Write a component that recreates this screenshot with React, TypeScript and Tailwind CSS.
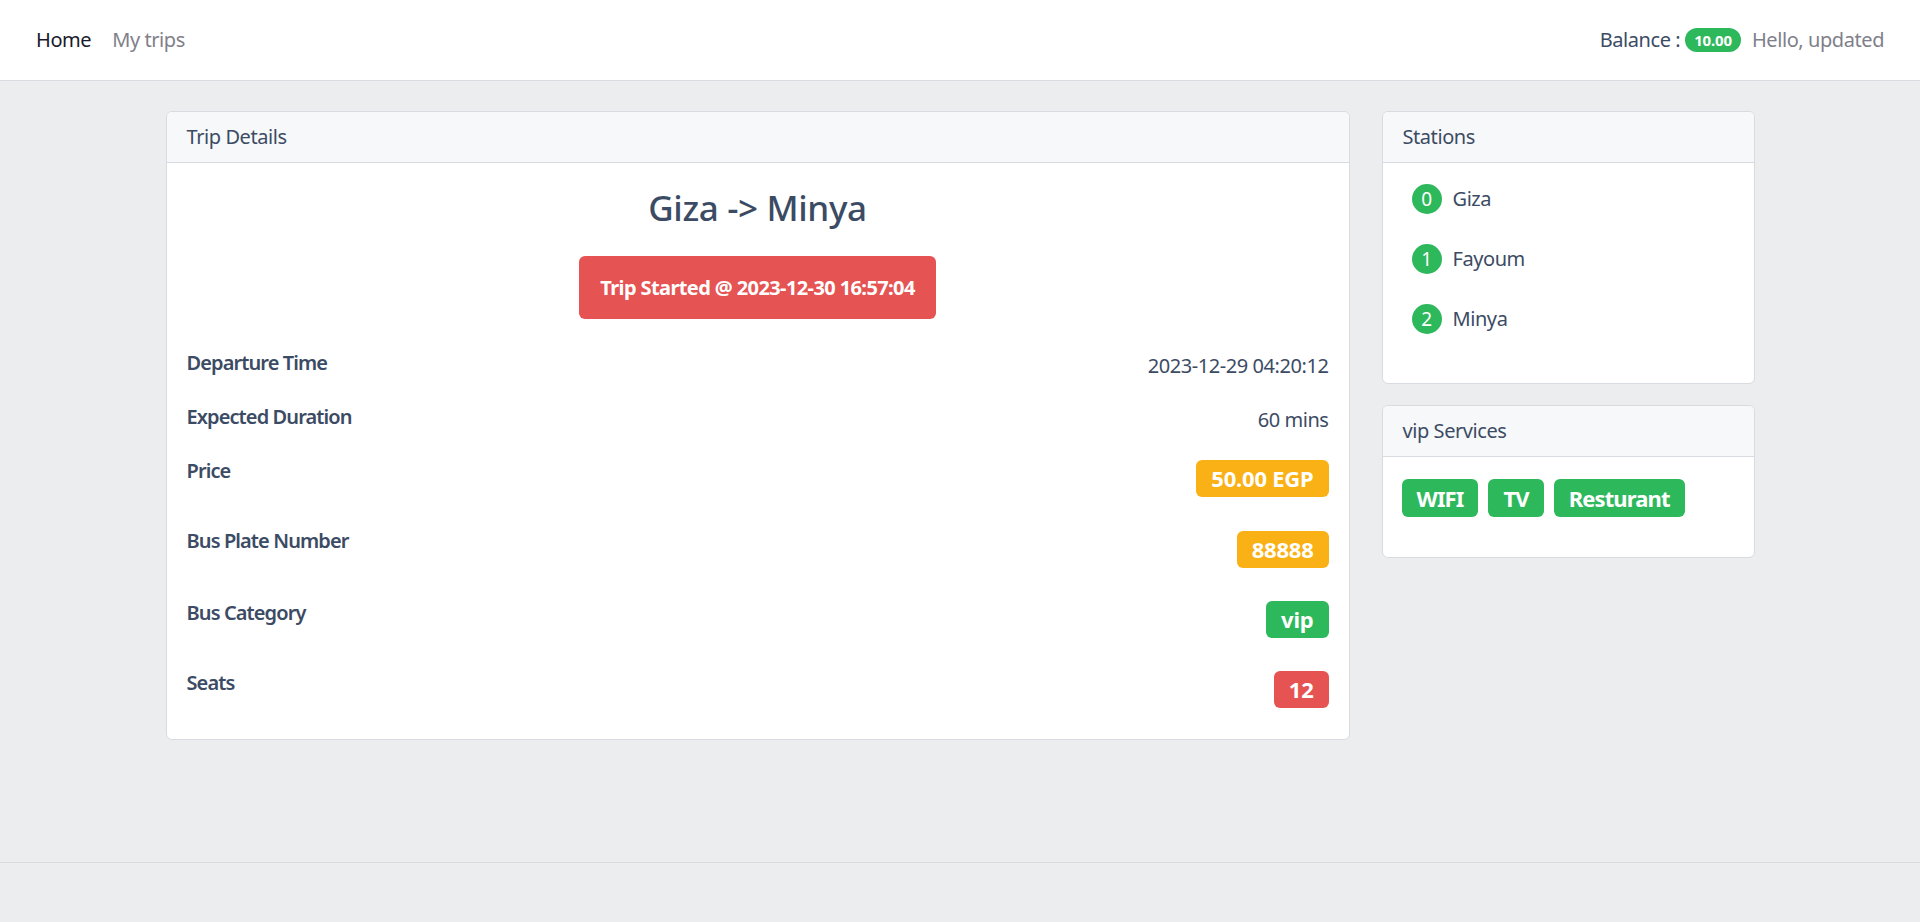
import React from "react";

const font = { fontFamily: '"Noto Sans", "Open Sans", sans-serif' };

function Card({ title, children, className = "" }: { title: string; children: React.ReactNode; className?: string }) {
  return (
    <div className={"bg-white border border-[#d8dbe0] rounded-[6px] overflow-hidden " + className}>
      <div className="h-[51px] px-[20px] flex items-center bg-[#f7f8f9] border-b border-[#d8dbe0] text-[20px] text-[#3c4b64]">
        {title}
      </div>
      {children}
    </div>
  );
}

function Badge({ children, color }: { children: React.ReactNode; color: string }) {
  return (
    <span className={"inline-flex items-center h-[37px] px-[15px] rounded-[6px] text-white font-bold text-[22px] tracking-[-0.01em] " + color}>
      {children}
    </span>
  );
}

export default function App() {
  const stations = ["Giza", "Fayoum", "Minya"];
  return (
    <div style={font} className="min-h-screen flex flex-col bg-[#ebedef] text-[#3c4b64] tracking-[-0.027em]">
      <header className="h-[81px] bg-white border-b border-[#d8dbe0] flex items-center justify-between px-[36px] text-[20px]">
        <nav className="flex items-center gap-[21px]">
          <span className="text-[#1a1a2c]">Home</span>
          <span className="text-[#80808a]">My trips</span>
        </nav>
        <div className="flex items-center">
          <span className="text-[#3c4b64]">Balance :</span>
          <span className="ml-[5px] inline-flex items-center h-[24px] px-[9px] rounded-full bg-[#2eb85c] text-white font-bold text-[15px] tracking-[-0.01em]">10.00</span>
          <span className="ml-[11px] text-[#80808a]">Hello, updated</span>
        </div>
      </header>

      <main className="flex-1 flex justify-center gap-[32px] pt-[30px]">
        <Card title="Trip Details" className="w-[1184px] self-start">
          <div className="p-[20px] flex flex-col">
            <h3 className="mt-[4px] h-[42px] leading-[42px] text-center text-[35px] font-medium tracking-[-0.01em]">Giza -&gt; Minya</h3>
            <div className="flex justify-center mt-[27px]">
              <div className="h-[63px] px-[21px] rounded-[6px] bg-[#e55353] text-white font-bold text-[20px] flex items-center tracking-[-0.03em]">
                Trip Started @ 2023-12-30 16:57:04
              </div>
            </div>
            <div className="mt-[29px] flex flex-col text-[20px]">
              <div className="h-[54px] flex justify-between items-start">
                <span className="font-semibold leading-[30px] tracking-[-0.045em]">Departure Time</span>
                <span className="leading-[30px] mt-[3px]">2023-12-29 04:20:12</span>
              </div>
              <div className="h-[54px] flex justify-between items-start">
                <span className="font-semibold leading-[30px] tracking-[-0.045em]">Expected Duration</span>
                <span className="leading-[30px] mt-[3px]">60 mins</span>
              </div>
              <div className="h-[70px] flex justify-between items-start">
                <span className="font-semibold leading-[30px] tracking-[-0.045em]">Price</span>
                <span className="mt-[4px]"><Badge color="bg-[#f9b115]">50.00 EGP</Badge></span>
              </div>
              <div className="h-[72px] flex justify-between items-start">
                <span className="font-semibold leading-[30px] tracking-[-0.045em]">Bus Plate Number</span>
                <span className="mt-[5px]"><Badge color="bg-[#f9b115]">88888</Badge></span>
              </div>
              <div className="h-[70px] flex justify-between items-start">
                <span className="font-semibold leading-[30px] tracking-[-0.045em]">Bus Category</span>
                <span className="mt-[3px]"><Badge color="bg-[#2eb85c]">vip</Badge></span>
              </div>
              <div className="h-[51px] flex justify-between items-start">
                <span className="font-semibold leading-[30px] tracking-[-0.045em]">Seats</span>
                <span className="mt-[3px]"><Badge color="bg-[#e55353]">12</Badge></span>
              </div>
            </div>
          </div>
        </Card>

        <div className="w-[373px] flex flex-col gap-[21px] self-start">
          <Card title="Stations">
            <div className="pt-[20px] pb-[48px] px-[29px] flex flex-col gap-[28px]">
              {stations.map((s, i) => (
                <div key={s} className="h-[32px] flex items-center">
                  <span className="w-[30px] h-[30px] rounded-full bg-[#2eb85c] text-white text-[19px] flex items-center justify-center">{i}</span>
                  <span className="ml-[11px] text-[20px]">{s}</span>
                </div>
              ))}
            </div>
          </Card>
          <Card title="vip Services">
            <div className="pt-[22px] pb-[40px] px-[19px] flex gap-[10px]">
              <span className="inline-flex items-center h-[38px] px-[15px] rounded-[6px] bg-[#2eb85c] text-white font-bold text-[22px] tracking-[-0.04em]">WIFI</span>
              <span className="inline-flex items-center h-[38px] px-[15px] rounded-[6px] bg-[#2eb85c] text-white font-bold text-[22px] tracking-[-0.04em]">TV</span>
              <span className="inline-flex items-center h-[38px] px-[15px] rounded-[6px] bg-[#2eb85c] text-white font-bold text-[22px] tracking-[-0.04em]">Resturant</span>
            </div>
          </Card>
        </div>
      </main>

      <footer className="h-[60px] border-t border-[#d8dbe0] bg-[#ebedef]" />
    </div>
  );
}
